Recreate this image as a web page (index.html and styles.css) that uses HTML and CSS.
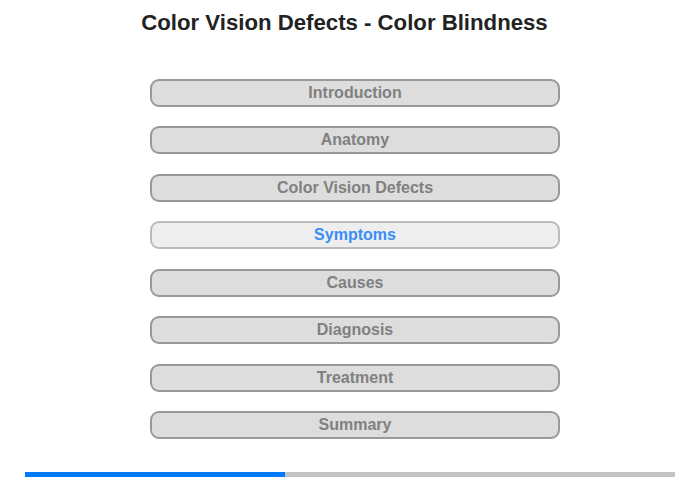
FILE: index.html
```html
<!DOCTYPE html>
<html>
<head>
<meta charset="utf-8">
<link rel="stylesheet" href="styles.css">
</head>
<body>
<div class="page">
  <h1 class="title">Color Vision Defects - Color Blindness</h1>
  <nav class="menu">
    <div class="item">Introduction</div>
    <div class="item">Anatomy</div>
    <div class="item">Color Vision Defects</div>
    <div class="item active">Symptoms</div>
    <div class="item">Causes</div>
    <div class="item">Diagnosis</div>
    <div class="item">Treatment</div>
    <div class="item">Summary</div>
  </nav>
  <div class="progress"><div class="fill" style="width:40%"></div></div>
</div>
</body>
</html>
```
FILE: styles.css
```css
html, body { margin: 0; padding: 0; background: #fff; }
body { font-family: "Liberation Sans", Arial, sans-serif; }
.page { width: 700px; height: 480px; display: flex; flex-direction: column; align-items: center; }
.title { margin: 10px 11px 0 0; font-size: 22.2px; line-height: 26px; font-weight: bold; color: #222; text-align: center; }
.menu { margin: 42.5px 0 0 10px; display: flex; flex-direction: column; gap: 19.5px; }
.item { box-sizing: border-box; width: 410px; height: 28px; border: 2px solid #999; border-radius: 9px; background: #ddd; color: #808080; font-weight: bold; font-size: 16px; line-height: 23px; text-align: center; }
.item.active { background: #eee; border-color: #bbb; color: #3a8ef6; }
.progress { margin-top: auto; margin-bottom: 3px; width: 650px; height: 5px; background: #c3c3c3; }
.fill { height: 100%; background: #007bff; }
```
